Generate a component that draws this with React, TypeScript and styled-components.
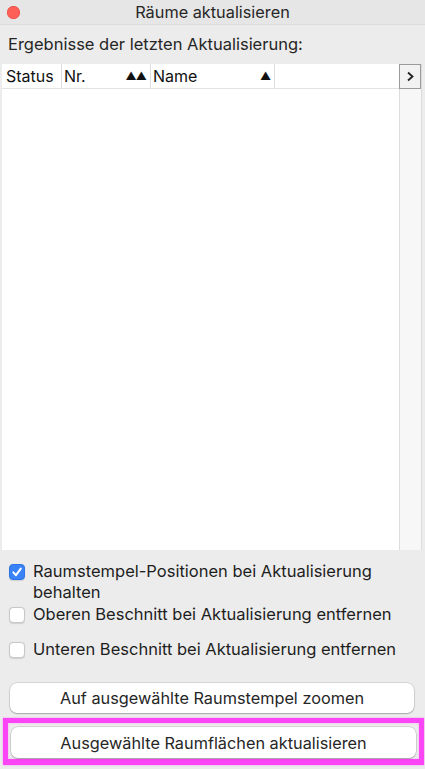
import React, { useState } from 'react';
import styled, { createGlobalStyle } from 'styled-components';

const GlobalStyle = createGlobalStyle`
  html, body {
    margin: 0;
    padding: 0;
    background: #ececec;
    font-family: Inter, "Noto Sans", Arial, sans-serif;
    color: #1e1e1e;
  }
`;

const columns = [
  { label: 'Status', width: 60, sort: '' },
  { label: 'Nr.', width: 89, sort: '▲▲' },
  { label: 'Name', width: 124, sort: '▲' },
];

const checks = [
  { label: 'Raumstempel-Positionen bei Aktualisierung behalten', checked: true },
  { label: 'Oberen Beschnitt bei Aktualisierung entfernen', checked: false },
  { label: 'Unteren Beschnitt bei Aktualisierung entfernen', checked: false },
];

const App = (): JSX.Element => {
  const [values, setValues] = useState(checks.map((c) => c.checked));

  const toggle = (index: number) => {
    setValues((old) => old.map((v, i) => (i === index ? !v : v)));
  };

  return (
    <Window>
      <GlobalStyle />
      <TitleBar>
        <CloseDot />
        <Title>Räume aktualisieren</Title>
      </TitleBar>

      <Body>
        <Caption>Ergebnisse der letzten Aktualisierung:</Caption>

        <Table>
          <Grid>
            <HeaderRow>
              {columns.map((col) => (
                <HeaderCell key={col.label} $width={col.width}>
                  <span>{col.label}</span>
                  {col.sort && <SortMark>{col.sort}</SortMark>}
                </HeaderCell>
              ))}
            </HeaderRow>
          </Grid>
          <SideColumn>
            <MoreButton type="button">
              <svg width="9" height="11" viewBox="0 0 9 11">
                <path d="M2 1.5 L6.5 5.5 L2 9.5" fill="none" stroke="#222" strokeWidth="1.8" />
              </svg>
            </MoreButton>
          </SideColumn>
        </Table>

        <Options>
          {checks.map((c, i) => (
            <Option key={c.label} $gap={i === 1}>
              <Box $checked={values[i]} onClick={() => toggle(i)}>
                {values[i] && (
                  <svg width="12" height="12" viewBox="0 0 12 12">
                    <path
                      d="M2.3 6.4 L5 9.2 L9.8 2.6"
                      fill="none"
                      stroke="#fff"
                      strokeWidth="2"
                      strokeLinecap="round"
                      strokeLinejoin="round"
                    />
                  </svg>
                )}
              </Box>
              <OptionText>{c.label}</OptionText>
            </Option>
          ))}
        </Options>

        <Actions>
          <PushButton type="button">Auf ausgewählte Raumstempel zoomen</PushButton>
          <Highlight>
            <PushButton type="button">Ausgewählte Raumflächen aktualisieren</PushButton>
          </Highlight>
        </Actions>
      </Body>
    </Window>
  );
};

const Window = styled.div`
  width: 425px;
  height: 769px;
  display: flex;
  flex-direction: column;
  background: #ececec;
  overflow: hidden;
`;

const TitleBar = styled.div`
  height: 24px;
  flex: none;
  display: flex;
  align-items: center;
  justify-content: center;
  position: relative;
  background: #e6e6e6;
  border-bottom: 1px solid #dcdcdc;
`;

const CloseDot = styled.span`
  position: absolute;
  left: 7px;
  top: 6px;
  width: 13px;
  height: 13px;
  border-radius: 50%;
  background: #fe5f57;
  box-shadow: inset 0 0 0 0.5px #e14640;
`;

const Title = styled.div`
  font-size: 16.3px;
  color: #262626;
`;

const Body = styled.div`
  flex: 1;
  display: flex;
  flex-direction: column;
  padding: 0 3px 0 2px;
`;

const Caption = styled.div`
  font-size: 16.5px;
  color: #262626;
  padding: 10px 0 0 6px;
  height: 28px;
  box-sizing: border-box;
  margin-bottom: 11px;
  line-height: 18px;
`;

const Table = styled.div`
  height: 486px;
  display: flex;
  background: #fff;
`;

const Grid = styled.div`
  flex: 1;
  background: #fff;
`;

const HeaderRow = styled.div`
  height: 24px;
  display: flex;
  border-bottom: 1px solid #e3e3e3;
`;

const HeaderCell = styled.div<{ $width: number }>`
  width: ${(p) => p.$width}px;
  box-sizing: border-box;
  display: flex;
  align-items: center;
  justify-content: space-between;
  padding: 0 2px 0 2px;
  border-right: 1px solid #dedede;
  font-size: 16px;
  color: #111;
  &:first-child {
    padding-left: 4px;
  }
`;

const SortMark = styled.span`
  font-size: 11px;
  letter-spacing: -1px;
  color: #111;
  padding-right: 2px;
`;

const SideColumn = styled.div`
  width: 21px;
  background: #f7f7f7;
  border-left: 1px solid #dcdcdc;
  border-right: 1px solid #dcdcdc;
`;

const MoreButton = styled.button`
  width: 22px;
  height: 25px;
  margin: 0 0 0 -1px;
  padding: 0;
  display: flex;
  align-items: center;
  justify-content: center;
  background: #f2f2f2;
  border: 1px solid #9a9a9a;
  cursor: pointer;
`;

const Options = styled.div`
  display: flex;
  flex-direction: column;
  padding: 13px 0 0 7px;
`;

const Option = styled.label<{ $gap: boolean }>`
  display: flex;
  align-items: flex-start;
  gap: 8px;
  margin-bottom: ${(p) => (p.$gap ? '16px' : '3px')};
`;

const Box = styled.span<{ $checked: boolean }>`
  flex: none;
  width: 16px;
  height: 16px;
  margin-top: 1px;
  box-sizing: border-box;
  border-radius: 4px;
  display: flex;
  align-items: center;
  justify-content: center;
  background: ${(p) => (p.$checked ? '#3a82f7' : '#fff')};
  border: ${(p) => (p.$checked ? '1px solid #2f74e6' : '1px solid #c8c8c8')};
  box-shadow: 0 0.5px 1px rgba(0, 0, 0, 0.12);
  cursor: pointer;
`;

const OptionText = styled.span`
  font-size: 16.5px;
  line-height: 21px;
  color: #1e1e1e;
  margin-top: -2px;
  padding-right: 20px;
`;

const Actions = styled.div`
  display: flex;
  flex-direction: column;
  padding-top: 20px;
  gap: 5px;
`;

const PushButton = styled.button`
  height: 30px;
  margin: 0 8px;
  border: none;
  border-radius: 7px;
  background: #fff;
  box-shadow: 0 0 0 0.5px rgba(0, 0, 0, 0.18), 0 1px 1.5px rgba(0, 0, 0, 0.22);
  font-family: Inter, "Noto Sans", Arial, sans-serif;
  font-size: 16.3px;
  color: #262626;
  cursor: pointer;
`;

const Highlight = styled.div`
  display: flex;
  flex-direction: column;
  margin: 0 -2px 0 1px;
  padding: 4px 0 1px;
  border: 5px solid #fa46f4;
  border-bottom-width: 6px;
  box-shadow: 0 0 1.5px #ff7cff, inset 0 0 1.5px #ff7cff;
  ${PushButton} {
    margin: 0 3px;
    height: 31px;
  }
`;

export default App;
